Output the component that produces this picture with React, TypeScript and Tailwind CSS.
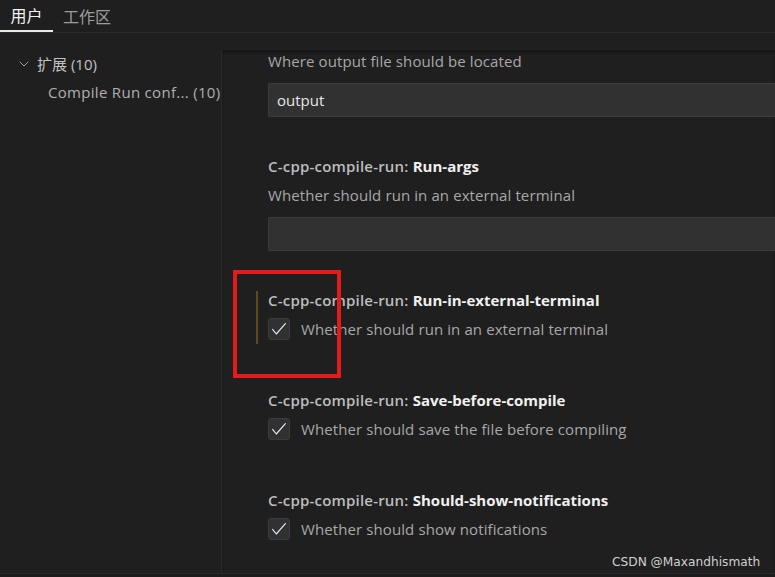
import { ChevronDown } from "lucide-react";

type CheckSetting = {
  key: string;
  description: string;
};

const checkSettings: CheckSetting[] = [
  { key: "Save-before-compile", description: "Whether should save the file before compiling" },
  { key: "Should-show-notifications", description: "Whether should show notifications" },
];

function Checkbox() {
  return (
    <div className="flex h-[22px] w-[22px] shrink-0 items-center justify-center rounded-[3px] border border-[#3c3c3c] bg-[#313131]">
      <svg width="22" height="22" viewBox="0 0 22 22" fill="none">
        <path d="M4 11.5 L8 16.5 L18 5" stroke="#dfe7f2" strokeWidth="1.3" strokeLinecap="round" strokeLinejoin="round" />
      </svg>
    </div>
  );
}

function Title({ name }: { name: string }) {
  return (
    <div className="h-[20px] whitespace-nowrap leading-[20px]">
      <span className="font-semibold tracking-[0.2px] text-[#bdbdbd]">C-cpp-compile-run: </span>
      <span className="font-bold text-[#f0f0f0]">{name}</span>
    </div>
  );
}

export default function App() {
  return (
    <div className="relative flex h-[577px] w-[775px] flex-col overflow-hidden bg-[#1f1f1f] font-['Open_Sans','Noto_Sans_CJK_SC',sans-serif] text-[15px]">
      {/* tabs */}
      <div className="flex h-[33px] shrink-0 items-end border-b border-[#2b2b2b] font-['Noto_Sans_CJK_SC',sans-serif] text-[16px]">
        <div className="flex h-[32px] w-[53px] items-center justify-center border-b-2 border-[#e8e8e8] text-[#f2f2f2]">
          用户
        </div>
        <div className="flex h-[32px] items-center pl-[10px] text-[#9d9d9d]">工作区</div>
      </div>

      <div className="flex min-h-0 flex-1">
        {/* tree */}
        <div className="w-[221px] shrink-0 pt-[21px]">
          <div className="flex h-[20px] items-center pl-[16px] text-[#c2c2c2]">
            <ChevronDown size={16} strokeWidth={1.2} className="text-[#bdbdbd]" />
            <span className="ml-[5px]">扩展 (10)</span>
          </div>
          <div className="mt-[8px] h-[20px] whitespace-nowrap pl-[48px] leading-[20px] tracking-[0.3px] text-[#b0b0b0]">
            Compile Run conf... (10)
          </div>
        </div>

        {/* settings list */}
        <div className="mt-[17px] flex-1 border-l border-t border-l-[#2b2b2b] border-t-[#171717] pl-[46px] shadow-[inset_0_2px_3px_-1px_#141414]">
          <div className="h-[20px] leading-[20px] tracking-[0.1px] text-[#a8a8a8]">Where output file should be located</div>
          <div className="mt-[12px] flex h-[34px] items-center rounded-l-[2px] border border-r-0 border-[#3c3c3c] bg-[#313131] pl-[8px] text-[#e6e6e6]">
            output
          </div>

          <div className="mt-[39px]">
            <Title name="Run-args" />
          </div>
          <div className="mt-[9px] h-[20px] leading-[20px] tracking-[0.1px] text-[#a8a8a8]">Whether should run in an external terminal</div>
          <div className="mt-[12px] h-[34px] rounded-l-[2px] border border-r-0 border-[#3c3c3c] bg-[#313131]" />

          <div className="relative mt-[39px]">
            <div className="absolute -left-[12px] top-[1px] h-[53px] w-[2px] bg-[#5e4b19]" />
            <Title name="Run-in-external-terminal" />
            <div className="mt-[8px] flex items-center gap-[11px]">
              <Checkbox />
              <span className="leading-[20px] tracking-[0.1px] text-[#a8a8a8]">Whether should run in an external terminal</span>
            </div>
          </div>

          {checkSettings.map((s) => (
            <div key={s.key} className="mt-[50px]">
              <Title name={s.key} />
              <div className="mt-[8px] flex items-center gap-[11px]">
                <Checkbox />
                <span className="leading-[20px] tracking-[0.1px] text-[#a8a8a8]">{s.description}</span>
              </div>
            </div>
          ))}
        </div>
      </div>

      <div className="h-[4px] shrink-0 border-t border-[#2b2b2b] bg-[#1c1c1c]" />

      {/* red annotation box */}
      <div className="absolute left-[233px] top-[270px] h-[108px] w-[108px] border-[4px] border-[#e31b1b]" />

      {/* watermark */}
      <div className="absolute left-[612px] top-[553px] font-['DejaVu_Sans',sans-serif] text-[12.2px] leading-[18px] text-[#cfcfcf]">
        CSDN @Maxandhismath
      </div>
    </div>
  );
}
